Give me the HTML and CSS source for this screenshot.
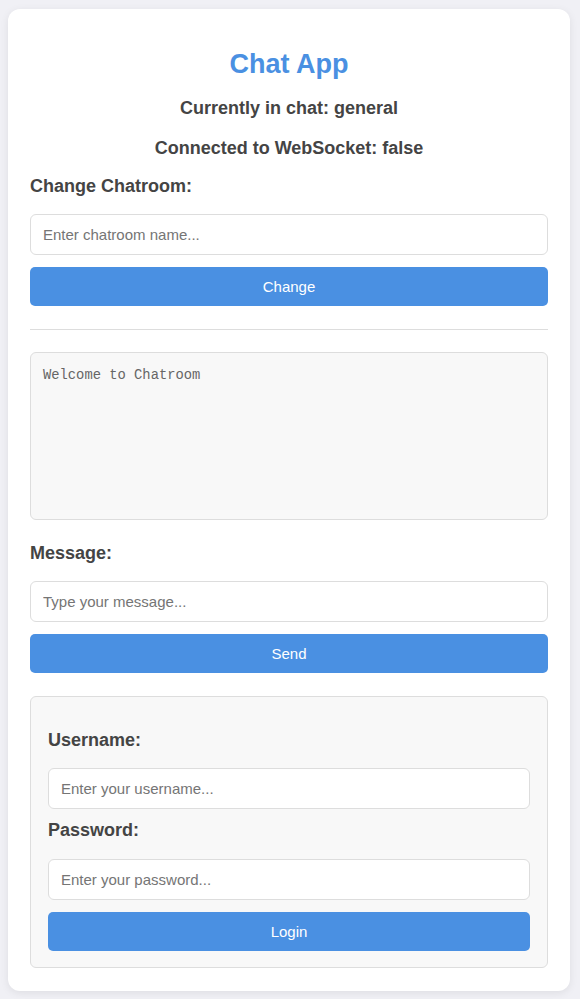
FILE: index.html
```html
<!DOCTYPE html>
<html lang="en">
<head>
<meta charset="utf-8">
<title>Chat App</title>
<link rel="stylesheet" href="styles.css">
</head>
<body>
<div class="card">
  <h1 class="title">Chat App</h1>
  <h3 class="status">Currently in chat: general</h3>
  <h3 class="status">Connected to WebSocket: false</h3>
  <label class="label label-first">Change Chatroom:</label>
  <input class="input" type="text" placeholder="Enter chatroom name...">
  <button class="btn">Change</button>
  <hr class="divider">
  <textarea class="chatbox" readonly>Welcome to Chatroom</textarea>
  <label class="label label-msg">Message:</label>
  <input class="input" type="text" placeholder="Type your message...">
  <button class="btn">Send</button>
  <div class="login">
    <label class="label label-user">Username:</label>
    <input class="input" type="text" placeholder="Enter your username...">
    <label class="label label-pass">Password:</label>
    <input class="input" type="password" placeholder="Enter your password...">
    <button class="btn">Login</button>
  </div>
</div>
</body>
</html>
```
FILE: styles.css
```css
* { box-sizing: border-box; }
html, body { margin: 0; padding: 0; }
body {
  background: #f0f0f5;
  font-family: "Liberation Sans", Arial, sans-serif;
  padding: 9px 10px 8px 8px;
}
.card {
  background: #fff;
  border-radius: 12px;
  box-shadow: 0 2px 8px rgba(0,0,0,0.08);
  padding: 22px 22px 23px 22px;
  display: flex;
  flex-direction: column;
}
.title {
  margin: 17px 0 17px;
  font-size: 27px;
  line-height: 32px;
  color: #4a90e2;
  text-align: center;
  font-weight: bold;
}
.status {
  margin: 0 0 18px;
  font-size: 18px;
  line-height: 22px;
  color: #444;
  text-align: center;
  font-weight: bold;
}
.label {
  display: block;
  font-size: 18px;
  line-height: 22px;
  font-weight: bold;
  color: #444;
  margin: 0 0 17px;
}
.label-first { margin-top: -2px; }
.label-msg { margin-top: 22px; }
.label-user { margin-top: 15px; }
.label-pass { margin-top: 10px; margin-bottom: 18px; }
.input {
  display: block;
  width: 100%;
  height: 41px;
  padding: 0 12px;
  border: 1px solid #ddd;
  border-radius: 6px;
  font-family: "Liberation Sans", Arial, sans-serif;
  font-size: 15px;
  color: #333;
  background: #fff;
  outline: none;
}
.input::placeholder { color: #757575; }
.btn {
  display: block;
  width: 100%;
  height: 39px;
  margin-top: 12px;
  border: none;
  border-radius: 5px;
  background: #4a90e2;
  color: #fff;
  font-family: "Liberation Sans", Arial, sans-serif;
  font-size: 15px;
  cursor: pointer;
}
.divider {
  width: 100%;
  border: none;
  border-top: 1px solid #ddd;
  margin: 23px 0 22px;
}
.chatbox {
  display: block;
  width: 100%;
  height: 168px;
  padding: 14px 12px 12px;
  border: 1px solid #ddd;
  border-radius: 6px;
  background: #f8f8f8;
  font-family: "Liberation Mono", "DejaVu Sans Mono", monospace;
  font-size: 13.8px;
  line-height: 17px;
  color: #666;
  resize: none;
  outline: none;
}
.login {
  margin-top: 23px;
  padding: 17px 17px 16px 17px;
  border: 1px solid #ddd;
  border-radius: 6px;
  background: #f8f8f8;
}
```
